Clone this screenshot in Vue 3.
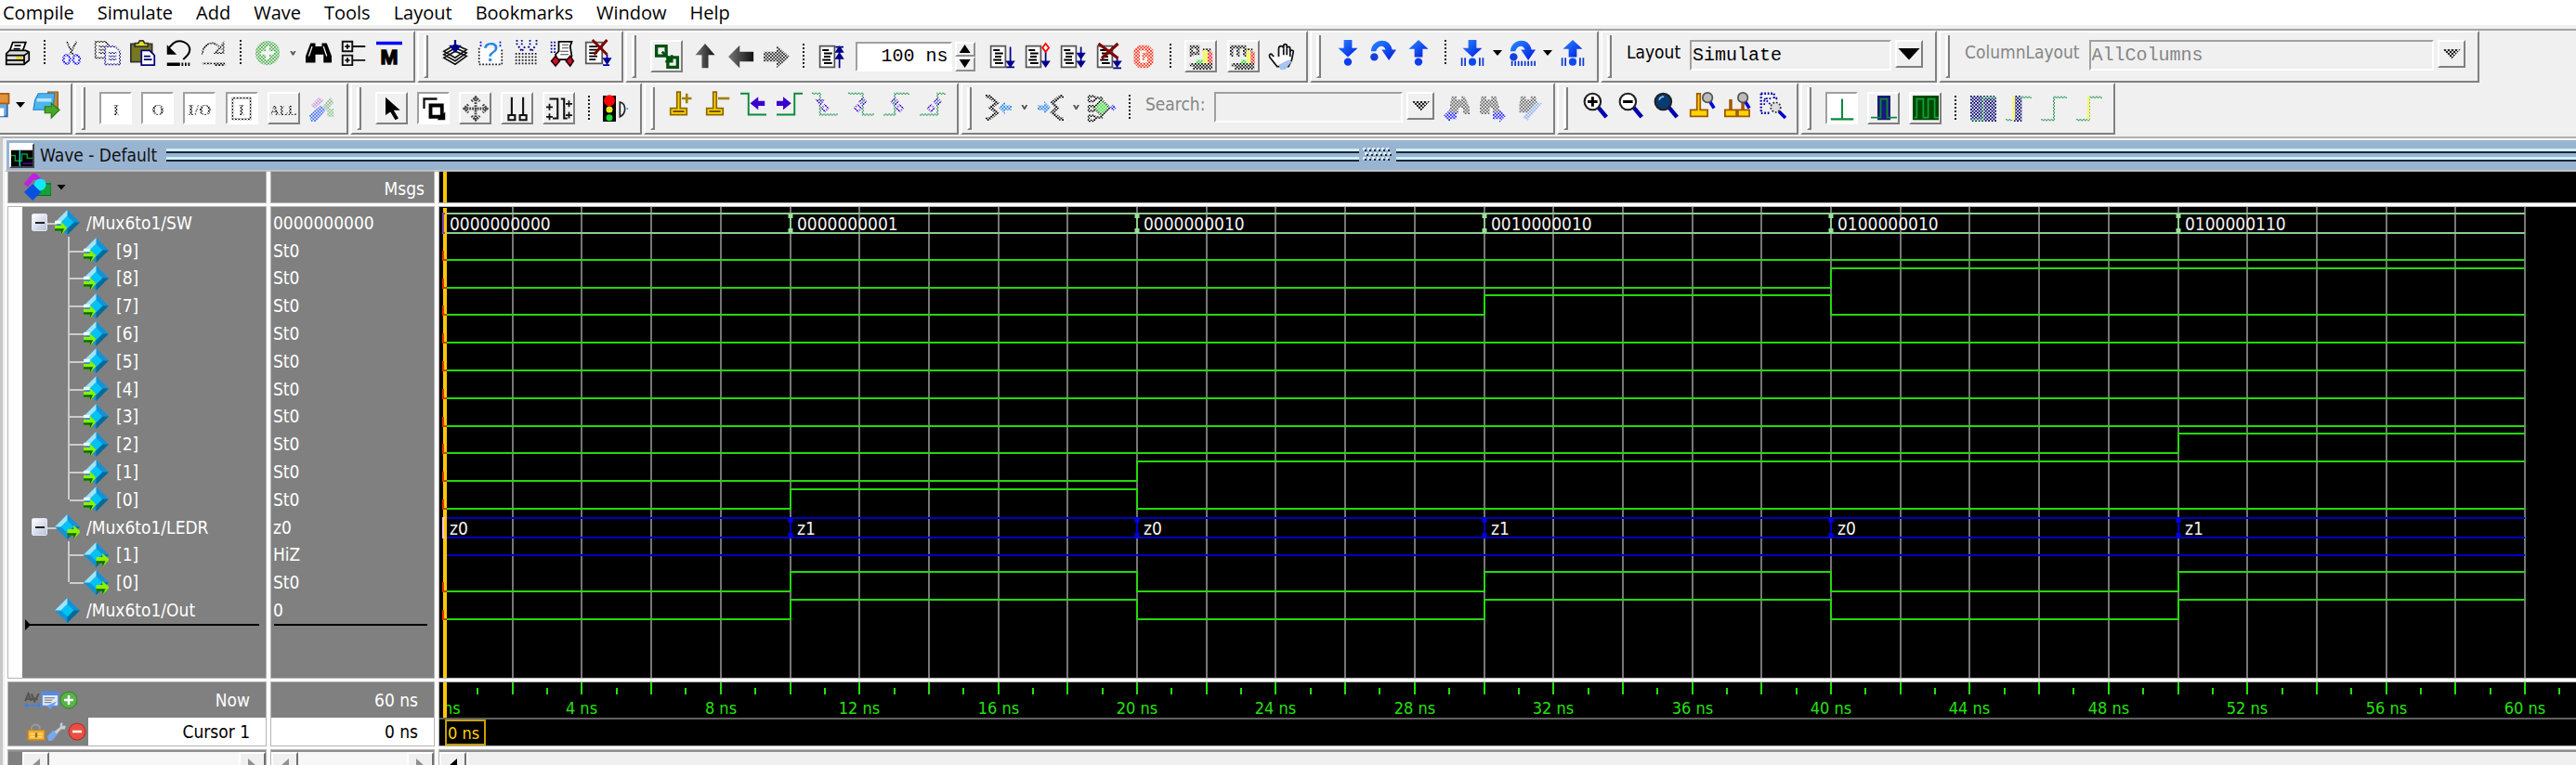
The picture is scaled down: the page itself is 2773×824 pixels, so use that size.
<script setup>
const menus = ['Compile', 'Simulate', 'Add', 'Wave', 'Tools', 'Layout', 'Bookmarks', 'Window', 'Help']

const page = '<path d="M1.5 1.5h9v13h-9z" fill="#fff" stroke="#555"/><path d="M3 4h4M4 6h5M4 8h4M3 10h5M4 12h5" stroke="#000" stroke-width="1.200" fill="none"/>'
const arrowD = '<path d="M5.500 0h5v5H14l-6 5.500L2 5h3.500z" fill="url(#blueArrow)"/>'
const arrowU = '<path d="M5.500 10.500h5v-5H14L8 0 2 5.500h3.500z" fill="url(#blueArrow)"/>'
const arc = '<path d="M.500 7C1-1 12-2 13.500 6H16l-4.500 6.500L7 6h2.500C8.500 3 5 3 3.500 7z" fill="url(#blueArrow)"/><circle cx="2.500" cy="10.500" r="2.400" fill="#1440d8"/>'
const bars = '<path d="M1.500 11v5M3.500 11v5M12.500 11v5M14.500 11v5" stroke="#1238d0" fill="none"/><circle cx="8" cy="13.500" r="2.300" fill="#0b4cf0"/>'
const lens = (inner, fill = '#fff') => `<path d="M10 9.500l5 6" stroke="#0000b0" stroke-width="2.600"/><circle cx="6.500" cy="6" r="5" fill="${fill}" stroke="#222" stroke-width="1.200"/>${inner}`
const wave = d => `<path d="${d}" fill="none" stroke="#0a8a3c" stroke-width="1.100"/>`
const bino = '<path d="M3 2h3v2h4V2h3l3 8v4h-5V9H6v5H0v-4z"/><path d="M4 4l-2 6M11 4l2 6" stroke="#fff" stroke-width=".7"/>'
const label = (t, s = 10) => `<text x="8" y="12" text-anchor="middle" font-family="Liberation Serif, serif" font-weight="bold" font-size="${s}">${t}</text>`

const icons = {
  print: '<path d="M5 1.500h8L11 7H3z" fill="#fff" stroke="#000"/><path d="M6 3.500h4M5.500 5.500h4" stroke="#000"/><path d="M1 8.500L3 6.500h10l2 1v5l-3 2.500H1z" fill="#ddd" stroke="#000"/><path d="M1 9.500h11v5M1 12.500h11M12 9.500l3-2" stroke="#000" fill="none"/><path d="M7 11h4" stroke="#e6d800" stroke-width="1.400"/>',
  cut: '<path d="M5 1l4 8M11 1L7 9" stroke="#000" fill="none"/><ellipse cx="5" cy="12" rx="2" ry="2.700" fill="none" stroke="#00f" stroke-width="1.500"/><ellipse cx="11" cy="12" rx="2" ry="2.700" fill="none" stroke="#00f" stroke-width="1.500"/>',
  copy: '<path d="M1 1h6l2 2v8H1zM3 4h4M3 6h4M3 8h4" fill="none" stroke="#000"/><path d="M7 4h6l3 3v8H7zM9 8h5M9 10h5M9 12h5" fill="#fff" stroke="#000088"/>',
  paste: '<path d="M.500 2.500h13v11H.500z" fill="#777722" stroke="#333"/><path d="M3 4V2h2l1-1.500h2L9 2h2v2z" fill="#e8e020" stroke="#333"/><path d="M7 6.500h5l3 3v6H7z" fill="#fff" stroke="#00007a"/><path d="M8.500 10h4M8.500 12h5" stroke="#00007a"/>',
  undo: '<path d="M2 5l3-3c4-3 10 0 10 4 0 3-2 4-4 6" fill="none" stroke="#000" stroke-width="1.200"/><path d="M1 3v6h6z"/><path d="M1 14h8v2H1z"/><path d="M10 15h5" stroke="#000" stroke-width="2" stroke-dasharray="1 1"/>',
  redo: '<path d="M1 9c0-5 5-9 9-6l3 3M14 2v6H9z" fill="none" stroke="#000"/><path d="M1 14.500h6" stroke="#000"/><path d="M8 15h7" stroke="#000" stroke-width="2"/>',
  add: '<circle cx="8" cy="8" r="7.500" fill="#4caf4c"/><path d="M7 4h2v3h3v2H9v3H7V9H4V7h3z" fill="#fff"/>',
  bino,
  tree: '<path d="M1 1h6v6H1zM1 9.500h6v6H1zM7 4h8M7 12.500h8M4 2.500v3M2.500 4h3M4 11v3M2.500 12.500h3" fill="none" stroke="#111" stroke-width="1.100"/>',
  mark: '<path d="M0 1h16v2H0z" fill="#00f"/><text x="8" y="15" text-anchor="middle" font-family="Liberation Sans, sans-serif" font-weight="bold" font-size="13" stroke="#000" stroke-width=".8">M</text>',
  stack: '<path d="M1 11l7 4 7-5-7-3zM1 9l7 4 7-5-7-3zM1 7l7 4 7-5-7-3z" fill="#fff" stroke="#111" stroke-width=".9"/><path d="M8 0v6M5.500 4l2.500 3 2.500-3z" fill="#00008b" stroke="#00008b" stroke-width="1.300"/>',
  ask: '<path d="M1 5v10h14V5" fill="#fff" stroke="#222" stroke-dasharray="1 1"/><path d="M2 1v3M14 1v3" stroke="#00f" stroke-dasharray="1 1"/><text x="8" y="13" text-anchor="middle" font-family="Liberation Sans, sans-serif" font-size="17" fill="#2288dd">?</text>',
  sheet: '<path d="M2 0v4M5 0v4M10 0v4M14 0v4" stroke="#00008b" stroke-dasharray="1 1"/><path d="M3 4l2 3 2-3M9 4l2 3 2-3" fill="none" stroke="#00008b" stroke-width="1.200" stroke-dasharray="1 1"/><path d="M1 8.500h14M1 10.500h14M1 12.500h14M1 14.500h14" stroke="#222" stroke-dasharray="1 1"/>',
  cart: '<path d="M1 1.500h4M1 3.500h4M1 5.500h4M1 7.500h4" stroke="#00008b" stroke-dasharray="1 1"/><path d="M6 1h8l-1 3 1 6-2 2H5l-1-3 2-2z" fill="#fff" stroke="#000"/><path d="M8 3h4M8 5h4M7 7h5M7 9h5" stroke="#444" stroke-width=".7"/><path d="M4 10l2.500 3L4 16l-2.500-3zM13 10l2 3-2 3-2.500-3z" fill="#c8102e" stroke="#300"/>',
  stopdoc: '<path d="M1 1.500h10v13H1z" fill="#fff" stroke="#555"/><path d="M3 4h5M3 6h5M3 8h5M3 10h5M3 12h4" stroke="#000"/><path d="M5 0l9 9M14 0L6 9" stroke="#7d0505" stroke-width="1.700"/><path d="M14 9v5M12 11.500l2 3 2-3zM11.500 15.500h4" stroke="#0000a0" fill="#0000a0"/>',
  link: '<path d="M1.500 1.500h6v6h-6zM8.500 8.500h6v6h-6z" fill="none" stroke="#005010" stroke-width="1.900"/><path d="M5 5l6 6M11 7v4H7" stroke="#005010" stroke-width="1.500" fill="none"/>',
  up: '<path d="M6 15V7H2l6-7 6 7h-4v8z" fill="url(#dark)"/>',
  left: '<path d="M15.500 5H7V1L0 8l7 7v-4h8.500z" fill="url(#dark)"/>',
  right: '<path d="M0 5h8V1l8 7-8 7v-4H0z" fill="#222"/>',
  restart: page + '<path d="M13.500 15V2M11 2h5M13.500 2l-2 3h4zM13.500 6l-2 3h4z" stroke="#00008b" fill="#00008b"/>',
  run: page + '<path d="M13.500 2v11M11 14.500h5M13.500 14l-2-3h4z" stroke="#00008b" fill="#00008b"/>',
  step: page + '<path d="M13.500 5v8M13.500 14l-2-3h4z" stroke="#00008b" fill="#00008b"/><path d="M13.500 0l2 2.500-2 2.500-2-2.500z" fill="#fff" stroke="#f00"/>',
  runall: page + '<path d="M13.500 2v11M13.500 9l-2-3h4zM13.500 14l-2-3h4z" stroke="#00008b" fill="#00008b"/>',
  brk: page + '<path d="M13.500 9v5M11 15h5M13.500 14l-2-3h4z" stroke="#00008b" fill="#00008b"/><path d="M2 0l12 9M14 0L4 9" stroke="#7d0505" stroke-width="1.800"/>',
  stop: '<path d="M5 1h6l3 3v8l-3 3H5l-3-3V4z" fill="#ff2d10"/><path d="M9.500 5h-3v6h3V8" fill="none" stroke="#fff" stroke-width="1.500"/>',
  perf: '<path d="M2 8V2h4v4H2M9 4h5M1 13h14M3 15h12" fill="none" stroke="#111" stroke-width="2"/><path d="M10.500 4v8" stroke="#ffff00" stroke-width="3"/><path d="M13.500 5v7" stroke="#ff1010" stroke-width="3"/><path d="M5 11h4" stroke="#0e0" stroke-width="2"/>',
  mem: '<path d="M1 8V2h8v6M5 3v5M10 4h4M1 13h14M3 15h12" fill="none" stroke="#111" stroke-width="2"/><path d="M11.500 4v8" stroke="#ffff00" stroke-width="2.500"/><path d="M14 5v7" stroke="#ff1010" stroke-width="2.500"/><path d="M7 11h3" stroke="#0e0" stroke-width="2"/>',
  hand: '<path d="M3 8L1.500 6.500C0 6 0 8 1 9l4 5h7l2-4 1-5c0-1.500-2-1-2 0V3c0-1.500-2-1.500-2 0V1.500C11 0 9 0 9 1.500V3c0-2-3-2-3 0v5" fill="#fff" stroke="#111"/><path d="M9 3v4M11 3v4M13 4v4" stroke="#111" fill="none"/><path d="M6 13l6-3 2 1-4 5H7z" fill="#a8c4f0"/>',
  stepin: arrowD + '<circle cx="8" cy="13.500" r="2.400" fill="#0b3ef0"/>',
  stepover: arc,
  stepout: arrowU + '<circle cx="8" cy="13.500" r="2.400" fill="#0b3ef0"/>',
  instin: arrowD + bars,
  instover: arc + '<path d="M1.500 13v3M3.500 13v3M5.500 13v3M7.500 13v3M9.500 13v3M11.500 13v3M13.500 13v3M15.500 13v3" stroke="#1238d0"/>',
  instout: arrowU + bars,
  save: '<path d="M2 2h11v13H2z" fill="#6fa8dc" stroke="#2a66b0"/><path d="M8 1h6v6H8z" fill="#e2923a" stroke="#a85c10"/><path d="M4 10h7v5H4z" fill="#fff"/>',
  load: '<path d="M9 0h6v10H9z" fill="#c98a3c" stroke="#8a5010" stroke-width=".7"/><path d="M3 1h10l-1 10H0l1-6z" fill="#4eb4f0" stroke="#1d84c8" stroke-width=".7"/><path d="M2 5h9" stroke="#b8e4ff" stroke-width="2"/><path d="M7 9h4V7l5 4-5 5v-3H7z" fill="#4aa828" stroke="#2a7810" stroke-width=".7"/>',
  inp: label('I'), outp: label('O'), inout: label('I/O'),
  internal: '<path d="M2.500 1.500h11v13h-11z" fill="none" stroke="#000"/>' + label('I'),
  all: label('ALL', 8),
  tools: '<path d="M1 6l5-5 3 2-6 5z" fill="#c890e0"/><path d="M8 7l5-6 2 3-4 5z" fill="#8ab890"/><path d="M0 12l7-6 3 3-6 7H1z" fill="#3a6af0"/><path d="M11 8h4v5h-4z" fill="#88c890"/>',
  arrow: '<path d="M4 1v11l3-2 3 5 2-1-3-5h4z"/>',
  select: '<path d="M2 8V2h8" fill="none" stroke="#111" stroke-width="1.300"/><path d="M6 6h7v7H6z" fill="none" stroke="#000" stroke-width="2.200"/><path d="M10 15h5v-5z"/>',
  pan: '<path d="M8 1v14M1 8h14M5.500 3.500L8 1l2.500 2.500M5.500 12.500L8 15l2.500-2.500M3.500 5.500L1 8l2.500 2.500M12.500 5.500L15 8l-2.500 2.500" fill="none" stroke="#444" stroke-width="1.600" stroke-dasharray="1 .6"/>',
  cursors: '<path d="M4.500 1v11M11.500 1v11M2.500 12h4v3h-4zM9.500 12h4v3h-4z" fill="none" stroke="#111" stroke-width="1.200"/>',
  edges: '<path d="M2 2h5v12H4M9 2h2v12h2" fill="none" stroke="#111" stroke-width="1.200"/><path d="M0 7h4M2 5v4M0 13h4M2 11v4M12 5h4M14 3v4M12 12h4M14 10v4" stroke="#111" fill="none"/>',
  traffic: '<path d="M0 0h8v16H0z"/><circle cx="4" cy="3" r="3.400" fill="#f00"/><circle cx="4" cy="8.500" r="2" fill="#e8e820"/><circle cx="4" cy="13.500" r="2" fill="#12e030"/><path d="M10.500 4c4 1 4 7 0 9z" fill="#fff" stroke="#222"/><path d="M14.500 8h1" stroke="#29f"/>',
  curadd: '<path d="M5 0h2v10h4v4H1v-4h4z" fill="#ffd500" stroke="#8a6800"/><path d="M2.500 12h7" stroke="#604000"/><path d="M8 4h6M11 1v6" stroke="#a08000" stroke-width="1.500"/>',
  curdel: '<path d="M5 0h2v10h4v4H1v-4h4z" fill="#ffd500" stroke="#8a6800"/><path d="M2.500 12h7" stroke="#604000"/><path d="M8 4h7" stroke="#a08000" stroke-width="1.500"/>',
  prev: wave('M0 1h5v13h11') + '<path d="M15 5.500h-4V3L6 7l5 4V8.500h4z" fill="#3a00d0"/>',
  next: wave('M16 1h-5v13H0') + '<path d="M0 5.500h4V3l5 4-5 4V8.500H0z" fill="#3a00d0"/>',
  fallp: wave('M0 1h5v13h11') + '<path d="M3 5l2 3 2-3zM8 8l2 2-2 2-2-2z" fill="none" stroke="#3a00d0"/>',
  falln: wave('M0 1h9v13h7') + '<path d="M9 4l2 2-2 2-2-2zM6 8l2 2-2 2-2-2z" fill="none" stroke="#3a00d0"/>',
  risep: wave('M16 1H7v13H0') + '<path d="M7 4l2 2-2 2-2-2zM10 8l2 2-2 2-2-2z" fill="none" stroke="#3a00d0"/>',
  risen: wave('M16 1h-5v13H0') + '<path d="M11 4l2 2-2 2-2-2zM7 8l2 2-2 2-2-2z" fill="none" stroke="#3a00d0"/>',
  expand: '<path d="M0 1h2l5 4-4 3 4 3-5 4H0" fill="none" stroke="#000" stroke-width="1.900"/><path d="M16 6.500h-4V4L8 8l4 4V9.500h4z" fill="#1a80f0"/>',
  collapse: '<path d="M16 1h-2L9 5l3 3-3 3 5 4h2" fill="none" stroke="#000" stroke-width="1.900"/><path d="M0 6.500h4V4l4 4-4 4V9.500H0z" fill="#1a80f0"/>',
  drivers: '<path d="M0 1h3l2 1-2 2H0zM0 7h3l2 1-2 2H0zM0 13h3l2 1-2 2H0zM5 2h3v12H5" fill="none" stroke="#000" stroke-width="1.300"/><path d="M8 3l5 5-5 5-5-5z" fill="#30e030" stroke="#000"/><path d="M15 6l2 2-2 2-2-2z" fill="#22f"/>',
  findprev: '<path d="M5 1h3v2h3V1h2l3 7v4h-4V8H9v4H4V6z" fill="#666"/><path d="M8 11H4V9l-4 4 4 4v-2h4z" fill="#22f"/>',
  findnext: '<path d="M1 1h3v2h3V1h3l2 7v3H8V8H6v4H0V6z" fill="#666"/><path d="M8 11h4V9l4 4-4 4v-2H8z" fill="#22f"/>',
  findopt: '<path d="M3 1h3v2h3V1h3l1 4-5 6H2V6z" fill="#666"/><path d="M4 14l8-9h4l-9 11z" fill="#8ab0f0"/>',
  zin: lens('<path d="M6.500 3v6M3.500 6h6" stroke="#000" stroke-width="1.700"/>'),
  zout: lens('<path d="M3.500 6h6" stroke="#000" stroke-width="1.700"/>'),
  zfull: lens('<path d="M4 5a3 3 0 013-2" stroke="#8cc0f0" fill="none"/>', '#063c72'),
  zcur: '<path d="M5 1h2v10h4.500v4H1v-4h4z" fill="#ffd500" stroke="#a05800"/><path d="M13 6l2.500 4" stroke="#00d" stroke-width="2"/><circle cx="11.500" cy="3.500" r="3" fill="#bbb" stroke="#555"/>',
  zcurs: '<path d="M3.500 5h1v6h3v4H.500v-4h3zM11 5h1v6h3.500v4H8.500v-4H11z" fill="#ffd500" stroke="#a05800"/><path d="M13 6l2.500 4" stroke="#00d" stroke-width="2"/><circle cx="11.500" cy="3.500" r="3" fill="#bbb" stroke="#555"/>',
  zsel: '<path d="M1 1h8v3h3M1 1v12h6" fill="none" stroke="#00a" stroke-width="1.300" stroke-dasharray="1 1"/><path d="M3 4l5 5M4 4h3M3 5v3" stroke="#00a" stroke-dasharray="1 1"/><path d="M12 12l4 4" stroke="#00c" stroke-width="2"/><circle cx="10" cy="9.500" r="3" fill="#ddd" stroke="#333" stroke-dasharray="1 1"/>',
  bare: '<path d="M8 2v13M1 14.500h14" stroke="#0a8a3c" fill="none" stroke-width="1.200"/>',
  single: '<path d="M4 0h8v15H4z" fill="#1a1a78"/><path d="M0 13.500h6V2h4v11.500h6" stroke="#0a8a3c" fill="none"/>',
  multi: '<path d="M0 0h16v15H0z" fill="#004800"/><path d="M1 13.500h1.500V2h4v11.500h3V2h4v11.500H16" stroke="#12a040" fill="none"/>',
  w1: '<path d="M0 0h16v16H0z" fill="#00006e"/>' + wave('M0 15h8V1h8'),
  w2: '<path d="M5 0h5v16H5z" fill="#00006e"/><path d="M5 0v15" stroke="#ff0" stroke-width="1.500"/>' + wave('M0 15h4M8 1h8'),
  w3: wave('M0 15h8V1h8'),
  w4: wave('M0 15h8V1h8') + '<path d="M7.500 0v15" stroke="#ff0" stroke-width="1.500"/>',
  format: '<path d="M1 7l5-6 5 5" fill="none" stroke="#c020e0" stroke-width="3"/><path d="M8 6h8v7H8z" fill="#18a038" stroke="#087020" stroke-width=".6"/><circle cx="9.500" cy="6.500" r="3.500" fill="#10e8ff"/><path d="M5 6l5 5-5 5-5-5z" fill="#0a50e0"/>',
  now: '<path d="M1 9l3-7 3 7M7 2l3 7 4-7M2 7h11" fill="none" stroke="#555" stroke-width="2"/><path d="M1 13h14M3.500 11L1 13l2.500 2.500M12.500 11l2.500 2-2.500 2.500" fill="none" stroke="#3a80e0" stroke-width="1.200"/>',
  grid: '<path d="M1 1h14v12H1z" fill="#dfe9fa" stroke="#5a8ae0"/><path d="M1 2.500h14" stroke="#5a8ae0" stroke-width="3"/><path d="M3 6h9M3 8h7M3 10h6" stroke="#888"/><path d="M5 13l9-4-6 7z" fill="#6a9cf0"/>',
  plus: '<circle cx="8" cy="8" r="7.200" fill="#58b448" stroke="#3c8a30"/><path d="M7 4h2v3h3v2H9v3H7V9H4V7h3z" fill="#fff"/>',
  minus: '<circle cx="8" cy="8" r="7.200" fill="#e85044" stroke="#b83028"/><path d="M4 7h8v2H4z" fill="#fff"/>',
  lock: '<path d="M4 7V5c0-4 7-4 7 0v1" fill="none" stroke="#999" stroke-width="1.600"/><path d="M1 7h14v8H1z" fill="#f8b838" stroke="#d88c10"/><path d="M3 10h10M3 12.500h10" stroke="#ffe08a"/><path d="M7 9h2v4H7z" fill="#a06a10"/>',
  wrench: '<path d="M0 12l5-5 4 3-5 6H1z" fill="#78a8f0"/><path d="M6 8l5-4V1l2-1v3h3l-1 3h-3L8 10z" fill="#c8ccd4"/>',
  wavewin: '<path d="M0 0h16v16H0z" fill="#000"/><path d="M0 0h16v4H0z" fill="#fff"/><path d="M0 8h3v4h5V7h4v3h4" fill="none" stroke="#0a9a30"/><path d="M9 14h7" stroke="#50b"/><path d="M6.500 4v12" stroke="#10e0f0"/>'
}

const gemBody = '<path d="M8 0l8 8-8 8-8-8z" fill="#1393d6"/><path d="M8 0v4L4 8H0z" fill="#9fe4f8"/><path d="M16 8l-8 8v-4l4-4z" fill="#066a96"/><path d="M8 4l4 4-4 4-4-4z" fill="#00c2f5"/>'
const gems = {
  in: gemBody + '<path d="M0 7h4v2H0z" fill="#eaffff"/><path d="M0 10h4V7.500l4 4L4 16v-2.500H0z" fill="#8cf000"/><path d="M0 12h6l-2 4v-2.500H0z" fill="#0a6a00"/>',
  out: gemBody + '<path d="M8 9.500h4V7l4.500 4L12 16v-2.500H8z" fill="#8cf000"/><path d="M8 12h6l-2 4v-2.500H8z" fill="#0a6a00"/>',
  none: gemBody
}

const i = (name, off) => ({ kind: 'icon', name, off })
const b = (name, down, off) => ({ kind: 'raised', name, down, off })
const sep = { kind: 'sep' }
const caret = { kind: 'caret' }
const caretOff = { kind: 'caret', off: 1 }

const toolbars = [
  [
    { w: 'w446', bare: true, items: [i('print'), sep, i('cut', 1), i('copy', 1), i('paste'), i('undo'), i('redo', 1), sep, i('add', 1), caretOff, i('bino'), i('tree'), i('mark')] },
    { w: 'w222', items: [i('stack'), i('ask'), i('sheet'), i('cart'), i('stopdoc')] },
    { w: 'w734', items: [b('link'), i('up'), i('left'), i('right', 1), sep, i('restart'), { kind: 'time' }, i('run'), i('step'), i('runall'), i('brk'), i('stop', 1), sep, b('perf', 0, 1), b('mem', 0, 1), i('hand')] },
    { w: 'w310', items: [i('stepin'), i('stepover'), i('stepout'), sep, i('instin'), caret, i('instover'), caret, i('instout')] },
    { w: 'w361', items: [{ kind: 'combo', id: 'layout', label: 'Layout', value: 'Simulate' }] },
    { w: 'w582', items: [{ kind: 'combo', id: 'columns', label: 'ColumnLayout', value: 'AllColumns', off: 1 }] }
  ],
  [
    { w: 'w77', bare: true, items: [{ kind: 'icon', name: 'save', cut: true }, caret, i('load')] },
    { w: 'w295', items: [b('inp', 1, 1), b('outp', 1, 1), b('inout', 1, 1), b('internal', 1, 1), b('all', 0, 1), i('tools', 1)] },
    { w: 'w314', items: [b('arrow'), b('select', 1), b('pan'), b('cursors'), b('edges'), sep, i('traffic')] },
    { w: 'w338', items: [i('curadd'), i('curdel'), i('prev'), i('next'), i('fallp', 1), i('falln', 1), i('risep', 1), i('risen', 1)] },
    { w: 'w640', items: [i('expand', 1), caretOff, i('collapse', 1), caretOff, i('drivers', 1), sep, { kind: 'search' }, i('findprev', 1), i('findnext', 1), i('findopt', 1)] },
    { w: 'w260', items: [i('zin'), i('zout'), i('zfull'), i('zcur'), i('zcurs'), i('zsel')] },
    { w: 'w338', items: [b('bare', 1), b('single'), b('multi'), sep, i('w1', 1), i('w2', 1), i('w3', 1), i('w4', 1)] }
  ]
]

const child = (n, value, dir, edges, last) => ({ name: `[${n}]`, value, dir, edges, child: true, last })
const signals = [
  { name: '/Mux6to1/SW', value: '0000000000', dir: 'in', root: true, bus: ['0000000000', '0000000001', '0000000010', '0010000010', '0100000010', '0100000110'] },
  child(9, 'St0', 'in', []),
  child(8, 'St0', 'in', [40]),
  child(7, 'St0', 'in', [30, 40]),
  child(6, 'St0', 'in', []),
  child(5, 'St0', 'in', []),
  child(4, 'St0', 'in', []),
  child(3, 'St0', 'in', []),
  child(2, 'St0', 'in', [50]),
  child(1, 'St0', 'in', [20]),
  child(0, 'St0', 'in', [10, 20], true),
  { name: '/Mux6to1/LEDR', value: 'z0', dir: 'out', root: true, bus: ['z0', 'z1', 'z0', 'z1', 'z0', 'z1'] },
  child(1, 'HiZ', 'out', null),
  child(0, 'St0', 'out', [10, 20, 30, 40, 50], true),
  { name: '/Mux6to1/Out', value: '0', dir: 'none', edges: [10, 20, 30, 40, 50] }
]

const END = 60
const x = t => Math.round(4 + t * 37.35)
const mid = n => Math.round(17 + n * 29.8)
const gridTimes = Array.from({ length: 30 }, (_, n) => (n + 1) * 2)
const minorTimes = Array.from({ length: 31 }, (_, n) => n * 2 + 1)
const labelTimes = Array.from({ length: 15 }, (_, n) => (n + 1) * 4)

function trace(edges, n) {
  const low = mid(n) + 10
  const high = low - 21
  let up = false
  let d = `M${x(0)} ${low}`
  for (const t of edges) {
    up = !up
    d += `H${x(t)}V${up ? high : low}`
  }
  return d + `H${x(END)}`
}
function busPath(n) {
  const top = mid(n) - 10
  const bottom = top + 21
  let d = `M${x(0)} ${top}H${x(END)}M${x(0)} ${bottom}H${x(END)}`
  for (let t = 10; t < END; t += 10) d += `M${x(t)} ${top}V${bottom}`
  return d
}
function busTicks(n) {
  const top = mid(n) - 10
  let d = ''
  for (let t = 10; t < END; t += 10) d += `M${x(t)} ${top}v5M${x(t)} ${top + 21}v-5`
  return d
}
</script>

<template>
  <div class="app">
    <svg class="defs" width="0" height="0" aria-hidden="true">
      <defs>
        <pattern id="dots" width="2" height="2" patternUnits="userSpaceOnUse">
          <path d="M0 0h1v1H0zM1 1h1v1H1z" fill="#fff" />
        </pattern>
        <mask id="stipple" maskUnits="userSpaceOnUse" x="-2" y="-2" width="20" height="20">
          <rect x="-2" y="-2" width="20" height="20" fill="url(#dots)" />
        </mask>
        <linearGradient id="blueArrow" x1="0" x2="1" y1="0" y2="1">
          <stop offset="0" stop-color="#2a8cff" />
          <stop offset="1" stop-color="#0018e0" />
        </linearGradient>
        <linearGradient id="dark" x1="0" x2="1" y1="0" y2="0">
          <stop offset="0" stop-color="#777" />
          <stop offset="1" stop-color="#111" />
        </linearGradient>
      </defs>
    </svg>

    <nav class="menu">
      <button v-for="m in menus" :key="m">{{ m }}</button>
    </nav>

    <div class="toolbars">
      <div v-for="(row, r) in toolbars" :key="r" class="toolrow">
        <div v-for="(g, k) in row" :key="k" class="group" :class="g.w">
          <span v-if="!g.bare" class="grip"></span>
          <div class="items">
            <template v-for="(it, n) in g.items" :key="n">
              <span v-if="it.kind === 'sep'" class="sep"></span>
              <button v-else-if="it.kind === 'caret'" class="caret" :class="{ faint: it.off }" aria-label="More"><span class="tri"></span></button>
              <div v-else-if="it.kind === 'time'" class="time">
                <input aria-label="Run length" value="100 ns" />
                <div class="spin">
                  <button aria-label="Increase"><span class="tri up"></span></button>
                  <button aria-label="Decrease"><span class="tri"></span></button>
                </div>
              </div>
              <div v-else-if="it.kind === 'combo'" class="combo" :class="[it.id, { off: it.off }]">
                <label :for="it.id">{{ it.label }}</label>
                <select :id="it.id" :disabled="!!it.off"><option>{{ it.value }}</option></select>
                <button class="drop" :aria-label="it.label + ' list'"><span class="tri big"></span></button>
              </div>
              <div v-else-if="it.kind === 'search'" class="combo search off">
                <label for="search">Search:</label>
                <input id="search" disabled />
                <button class="drop" aria-label="Search history"><span class="tri big"></span></button>
              </div>
              <button v-else class="tool" :class="[it.kind, { down: it.down, cut: it.cut }]" :aria-label="it.name">
                <span class="face">
                  <svg viewBox="0 0 16 16" width="28" height="28">
                    <g :mask="it.off ? 'url(#stipple)' : null" v-html="icons[it.name]"></g>
                  </svg>
                </span>
              </button>
            </template>
          </div>
        </div>
      </div>
    </div>

    <section class="window">
      <header class="title">
        <span class="winicon"><svg viewBox="0 0 16 16" width="23" height="23" v-html="icons.wavewin"></svg></span>
        <h1>Wave - Default</h1>
        <span class="lines"></span>
        <svg class="grab" width="34" height="16">
          <g v-for="n in 6" :key="n">
            <path :d="`M${n * 5 - 4} 0h3v3h-3zM${n * 5 - 2} 5h3v3h-3zM${n * 5 - 4} 10h3v3h-3z`" fill="#dcecf8" />
            <path :d="`M${n * 5 - 2} 2h2v2h-2zM${n * 5} 7h2v2h-2zM${n * 5 - 2} 12h2v2h-2z`" fill="#1c2a3c" />
          </g>
        </svg>
        <span class="lines"></span>
      </header>

      <div class="panes">
        <div class="cell head">
          <button class="fmt" aria-label="Format"><svg viewBox="0 0 16 16" width="29" height="29" v-html="icons.format"></svg><span class="tri"></span></button>
        </div>
        <div class="cell head msgs">Msgs</div>
        <div class="cell black"><span class="yellow"></span></div>

        <div class="cell names">
          <div class="rows">
            <div v-for="(s, n) in signals" :key="n" class="signal" :class="{ child: s.child, last: s.last, root: s.root }">
              <span v-if="s.child" class="branch"></span>
              <button v-if="s.root" class="toggle" aria-label="Collapse"></button>
              <svg class="gem" viewBox="0 0 16 16" width="27" height="27" v-html="gems[s.dir]"></svg>
              <span>{{ s.name }}</span>
            </div>
          </div>
          <div class="insert"><span class="marker"></span></div>
        </div>
        <div class="cell values">
          <div class="rows">
            <div v-for="(s, n) in signals" :key="n" class="value">{{ s.value }}</div>
          </div>
          <div class="insert"></div>
        </div>
        <div class="cell black">
          <svg class="plot">
            <path v-for="t in gridTimes" :key="t" :d="`M${x(t)} 0v600`" class="gridline" />
            <template v-for="(s, n) in signals" :key="n">
              <template v-if="s.bus">
                <path :d="busPath(n)" :class="n ? 'busz' : 'bus'" />
                <path :d="busTicks(n)" class="ticks" :class="n ? 'busz' : 'bus'" />
                <text v-for="(v, k) in s.bus" :key="k" :x="x(k * 10) + 7" :y="mid(n) + 8">{{ v }}</text>
              </template>
              <path v-else-if="s.edges" :d="trace(s.edges, n)" class="bit" />
              <path v-else :d="`M${x(0)} ${mid(n)}H${x(END)}`" class="busz" />
            </template>
            <path d="M6 1v600" class="cursor" />
            <template v-for="(s, n) in signals" :key="n">
              <path v-if="s.bus" :d="`M6 ${mid(n) - 10}h-2v21h2`" :class="n ? 'startz' : 'startbus'" />
              <path v-else-if="s.edges" :d="`M4 ${mid(n)}v10h4`" class="start" />
            </template>
          </svg>
        </div>

        <div class="cell foot">
          <div class="now">
            <button aria-label="Now"><svg viewBox="0 0 16 16" width="18" height="18" v-html="icons.now"></svg></button>
            <button aria-label="Grid"><svg viewBox="0 0 16 16" width="20" height="20" v-html="icons.grid"></svg></button>
            <button aria-label="Add cursor"><svg viewBox="0 0 16 16" width="20" height="20" v-html="icons.plus"></svg></button>
            <span class="end">Now</span>
          </div>
          <div class="cur">
            <button aria-label="Lock"><svg viewBox="0 0 16 16" width="20" height="22" v-html="icons.lock"></svg></button>
            <button aria-label="Edit"><svg viewBox="0 0 16 16" width="20" height="20" v-html="icons.wrench"></svg></button>
            <button aria-label="Remove"><svg viewBox="0 0 16 16" width="20" height="20" v-html="icons.minus"></svg></button>
            <span class="end white">Cursor 1</span>
          </div>
        </div>
        <div class="cell foot second">
          <div class="now"><span class="end">60 ns</span></div>
          <div class="cur"><span class="end white">0 ns</span></div>
        </div>
        <div class="cell black foot">
          <svg class="timeline">
            <path v-for="t in gridTimes" :key="t" :d="`M${x(t)} 0v13`" class="tick" />
            <path v-for="t in minorTimes" :key="t" :d="`M${x(t)} 6v7`" class="tick" />
            <text :x="x(0)" y="34">ns</text>
            <text v-for="t in labelTimes" :key="t" :x="x(t)" y="34" text-anchor="middle">{{ t }} ns</text>
            <path d="M6 0v38" class="cursor" />
          </svg>
          <div class="lane"><span class="cursorbox">0 ns</span></div>
        </div>

        <div class="cell scroll inset"><button class="sb" aria-label="Left"><span class="tri left"></span></button><span class="trough"></span><button class="sb" aria-label="Right"><span class="tri right"></span></button></div>
        <div class="cell scroll"><button class="sb" aria-label="Left"><span class="tri left"></span></button><span class="trough"></span><button class="sb" aria-label="Right"><span class="tri right"></span></button></div>
        <div class="cell scroll live"><button class="sb" aria-label="Left"><span class="tri left"></span></button><span class="thumb"></span></div>
      </div>
    </section>
  </div>
</template>

<style>
html, body { margin: 0; background: #f0f0f0; }
</style>

<style scoped>
.app { height: 100vh; overflow: hidden; display: flex; flex-direction: column; background: #f0f0f0; font: 19px/24px "DejaVu Sans Condensed", "Noto Sans", sans-serif; color: #000; }
.app *, .app *::before, .app *::after { box-sizing: border-box; }
button { border: 0; padding: 0; margin: 0; background: none; font: inherit; color: inherit; }
svg { display: block; flex: none; }
.defs { position: absolute; }

.menu { display: flex; gap: 25px; height: 31px; padding: 0 3px; background: #fff; border-bottom: 4px solid #f0f0f0; font: 20px/27px "Open Sans", "Noto Sans", sans-serif; flex: none; }

.toolbars { flex: none; border-top: 2px solid #a4a4a4; padding-bottom: 2px; }
.toolrow { display: flex; gap: 2px; }
.group { display: flex; height: 56px; border: 2px solid #808080; border-top-color: #fff; border-left-color: #fff; flex: none; padding-right: 7px; }
.w446 { min-width: 447px; }
.w222 { min-width: 222px; }
.w734 { min-width: 735px; }
.w310 { min-width: 311px; }
.w361 { min-width: 362px; }
.w582 { min-width: 582px; }
.w77 { min-width: 78px; }
.w295 { min-width: 295px; }
.w314 { min-width: 314px; }
.w338 { min-width: 339px; }
.w640 { min-width: 640px; }
.w260 { min-width: 260px; }
.w446, .w77 { border-left: 0; }
.grip { width: 5px; margin: 3px 10px 3px 5px; border: 2px solid #808080; border-top: 0; border-left-color: #fff; }
.items { flex: 1; display: flex; justify-content: space-between; align-items: center; align-self: flex-start; padding-top: 8px; }
.sep { width: 2px; height: 28px; margin: 0 9px; background: repeating-linear-gradient(#222 0 2px, transparent 2px 4px); }
.tool { width: 38px; display: flex; justify-content: center; }
.tool.cut { width: 13px; overflow: hidden; justify-content: flex-end; }
.tool svg { overflow: visible; }
.raised { width: 45px; }
.face { display: flex; align-items: center; justify-content: center; }
.raised .face { width: 35px; height: 35px; border: 2px solid #808080; border-top-color: #fff; border-left-color: #fff; }
.raised.down .face { background: #fff; border-color: #a0a0a0 #fff #fff #a0a0a0; }
.tri { display: block; width: 10px; height: 6px; background: currentColor; clip-path: polygon(0 0, 100% 0, 50% 100%); }
.tri.up { clip-path: polygon(50% 0, 100% 100%, 0 100%); }
.tri.big { width: 24px; height: 13px; }
.off .tri.big { width: 20px; height: 11px; background: repeating-conic-gradient(#222 0 25%, #ccc 0 50%) 0 0 / 4px 4px; }
.caret { width: 16px; height: 28px; display: flex; justify-content: center; align-items: center; }
.caret.faint .tri { width: 7px; height: 5px; background: #555; clip-path: polygon(0 0, 30% 0, 50% 50%, 70% 0, 100% 0, 60% 100%, 40% 100%); }

.time { display: flex; gap: 3px; margin: 0 9px 0 7px; }
.time input { width: 104px; height: 32px; text-align: right; }
input, select { font: 20px/24px "Liberation Mono", monospace; color: #000; margin: 0; padding: 0 2px; border: 2px solid #a0a0a0; border-right-color: #fff; border-bottom-color: #fff; border-radius: 0; outline: 0; background: #fff; }
.spin { width: 22px; height: 32px; display: flex; flex-direction: column; }
.spin button { flex: 1; display: flex; justify-content: center; align-items: center; border: 2px solid #909090; border-top-color: #fff; border-left-color: #fff; }
.spin .tri { width: 12px; height: 9px; }

.combo { flex: 1; display: flex; align-items: flex-start; gap: 4px; padding: 0 8px; }
.combo label { padding: 1px 6px 0 0; }
.layout, .columns { padding: 0 6px; }
.combo select, .combo input { flex: 1; height: 33px; padding: 0 1px; appearance: none; background: #f0f0f0; opacity: 1; }
.combo.off, .combo.off select { color: #858585; }
.drop { width: 30px; height: 30px; display: flex; align-items: center; justify-content: center; border: 2px solid #808080; border-top-color: #fff; border-left-color: #fff; color: #000; }
.search input { width: 203px; flex: none; }
.search { flex: none; padding: 0 4px 0 6px; }

.window { flex: 1; min-height: 0; display: flex; flex-direction: column; border-left: 3px solid #c8c8c8; border-top: 2px solid #b0b0b0; }
.title { flex: none; height: 36px; display: flex; align-items: center; gap: 3px; background: #99b4d1; border: 2px solid #f4f4f4; border-right: 0; border-bottom: 2px solid #c4c4c4; padding-left: 3px; margin: 0 -14px 0 2px; color: #111; }
.winicon { width: 27px; height: 27px; padding: 0; border: 2px solid #444; border-top-color: #fff; border-left-color: #fff; }
.title h1 { margin: 0 7px 0 3px; font: inherit; }
.lines { flex: 1; height: 14px; background: linear-gradient(#cdeff8 0 3px, #1a2636 3px 5px, transparent 5px 9px, #cdeff8 9px 12px, #1a2636 12px 14px); }

.panes { flex: 1; min-height: 0; margin-left: 2px; padding-left: 4px; display: grid; gap: 5px 6px; grid-template-columns: 277px 175px 1fr; grid-template-rows: 33px minmax(0, 1fr) 68px 16px; background: #fdfdfd; color: #fff; }
.cell { background: #808080; box-shadow: 0 0 0 1px #b4b4b4; min-width: 0; overflow: hidden; }
.black { background: #000; }
.head { display: flex; align-items: center; }
.fmt { margin-left: 17px; display: flex; align-items: center; gap: 6px; color: #000; }
.msgs { justify-content: flex-end; padding-right: 10px; padding-top: 2px; }
.yellow { display: block; width: 4px; height: 100%; margin-left: 4px; background: #ffc800; }

.names { border-left: 15px solid #fff; }
.rows { display: grid; grid-template-rows: repeat(15, 1fr); height: 447px; margin-top: 2px; }
.signal { display: flex; align-items: center; gap: 7px; padding-left: 35px; position: relative; white-space: nowrap; }
.signal.root { padding-left: 10px; }
.signal.child { padding-left: 66px; gap: 8px; }
.toggle { width: 17px; height: 19px; margin-right: 1px; border-radius: 2px; border: 1px solid #e4e8f4; background: linear-gradient(#222, #222) center / 10px 2px no-repeat, linear-gradient(135deg, #fff, #b8c0dc); }
.signal.root::before { content: ""; position: absolute; left: 27px; top: 50%; width: 10px; height: 2px; background: #ccc; }
.signal svg { position: relative; }
.branch { position: absolute; left: 49px; top: 0; bottom: 0; width: 17px; border-left: 2px solid #ccc; }
.branch::after { content: ""; position: absolute; left: 0; right: 0; top: 50%; height: 2px; background: #ccc; }
.last .branch { bottom: 50%; }
.last .branch::after { top: auto; bottom: -2px; }
.value { display: flex; align-items: center; padding-left: 2px; }
.insert { height: 2px; margin: 0 7px 0 3px; background: #000; position: relative; }
.marker { position: absolute; left: 0; top: -5px; width: 6px; height: 12px; background: #000; clip-path: polygon(0 0, 100% 50%, 0 100%); }

.plot { width: 100%; height: 100%; }
svg path.gridline { stroke: #767676; stroke-width: 2; }
svg path.bit, svg path.bus, svg path.busz { fill: none; stroke: #26d80c; stroke-width: 2; }
svg path.bus { stroke: #8ccc8c; }
svg path.busz { stroke: #0000c4; }
svg path.ticks { stroke-width: 5; }
svg path.ticks.bus { stroke: #98e098; }
svg path.ticks.busz { stroke: #0000e8; }
svg path.cursor { stroke: #ffc800; stroke-width: 4; fill: none; }
svg path.start { stroke: #d83800; stroke-width: 2; fill: none; }
svg path.startbus { stroke: #7a4ab0; stroke-width: 2; fill: none; }
svg path.startz { stroke: #ffc0e0; stroke-width: 2; fill: none; }
.plot text { fill: #f4f4f4; }

.foot { display: flex; flex-direction: column; }
.now { height: 38px; display: flex; align-items: center; padding-left: 17px; }
.cur { height: 30px; display: flex; align-items: center; padding-left: 20px; gap: 2px; }
.second .now, .second .cur { padding-left: 0; }
.end { flex: 1; text-align: right; padding-right: 17px; }
.white { background: #fff; color: #000; line-height: 30px; }
.timeline { width: 100%; height: 38px; }
svg path.tick { stroke: #26e010; stroke-width: 2; }
.timeline text { fill: #26e010; font-size: 18px; }
.lane { height: 30px; border-top: 2px solid #606060; }
.cursorbox { display: block; width: 44px; height: 28px; margin-left: 6px; border: 2px solid #c8a000; color: #ffd000; font-size: 18px; line-height: 26px; padding-left: 1px; }

.scroll { display: flex; align-items: flex-start; border-top: 2px solid #909090; }
.inset { padding-left: 15px; }
.sb { width: 29px; height: 30px; flex: none; display: flex; align-items: center; justify-content: center; background: #f0f0f0; border: 2px solid #707070; border-top-color: #fff; border-left-color: #fff; color: #909090; }
.tri.left { width: 9px; height: 16px; clip-path: polygon(100% 0, 100% 100%, 0 50%); }
.tri.right { width: 9px; height: 16px; clip-path: polygon(0 0, 100% 50%, 0 100%); }
.trough { flex: 1; height: 30px; background: #f7f7f7; }
.thumb { flex: 1; height: 30px; background: #f0f0f0; border-left: 2px solid #fff; }
.live .sb { color: #000; }
</style>
